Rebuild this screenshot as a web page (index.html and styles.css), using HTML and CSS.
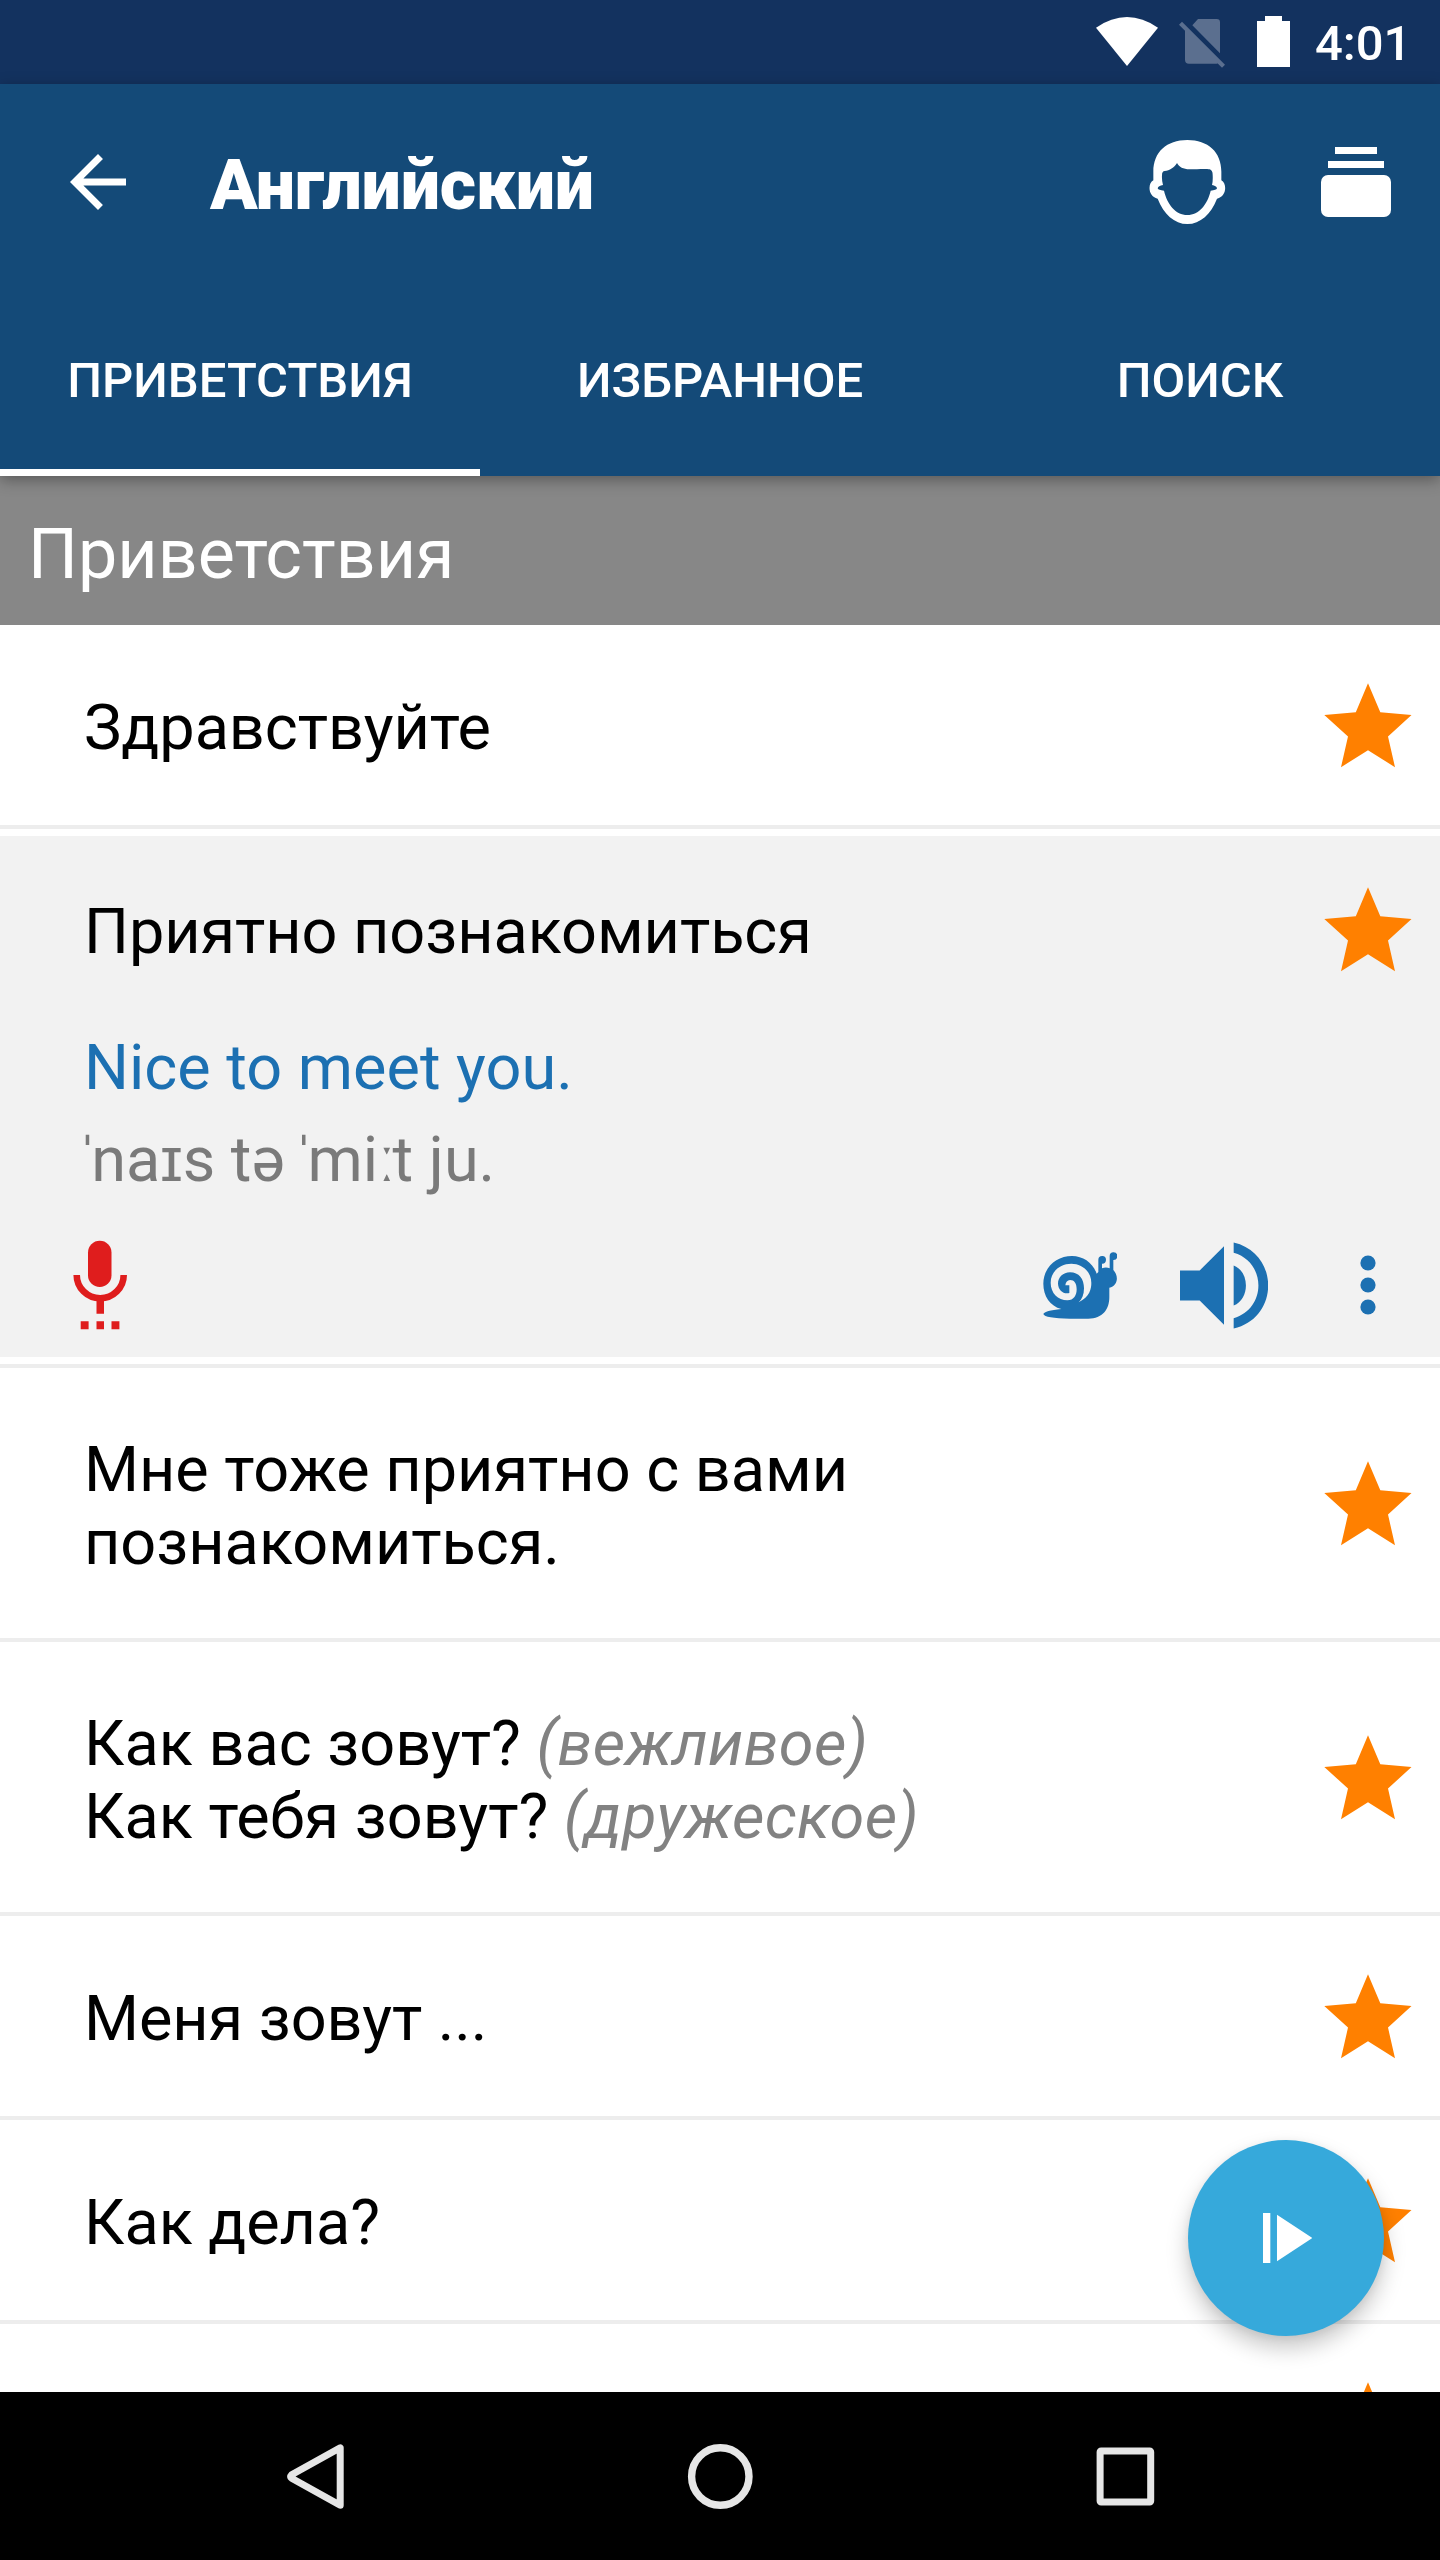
FILE: index.html
```html
<!DOCTYPE html>
<html lang="ru">
<head>
<meta charset="utf-8">
<title>Английский</title>
<link rel="stylesheet" href="styles.css">
</head>
<body>
<svg width="0" height="0" class="defs"><symbol id="star" viewBox="0 0 96 96"><path fill="#ff8000" d="M48 6.2 60.3 35.2 91.5 37.9 68 59.6 75 90.2 48 73.2 21 90.2 28 59.6 4.3 37.9 35.8 35.2Z"/></symbol></svg>
<div class="screen">
  <div class="statusbar">
    <svg class="wifi" viewBox="108 51 186 147"><path fill="#fff" d="M108 83Q201 19 294 83L201 198Z"/></svg>
    <svg class="nosim" viewBox="357 57 138 147"><path fill="#5b6f8f" d="M414 57H470Q480 57 480 67V160L397 76ZM375 91L474 190Q472 191 470 191H387Q375 191 375 179ZM366 65 495 194 486 203 357 74Z"/></svg>
    <svg class="battery" viewBox="0 0 33 51"><path fill="#fff" d="M8 0H25V5H33V51H0V5H8Z"/></svg>
    <span class="clock">4:01</span>
  </div>
  <header class="appbar">
    <div class="toolbar">
      <svg class="back" viewBox="0 0 24 24"><path fill="#fff" d="M20 11H7.83l5.59-5.59L12 4l-8 8 8 8 1.41-1.41L7.83 13H20z"/></svg>
      <h1 class="title">Английский</h1>
      <svg class="face" viewBox="268 420 230 252"><path fill="#fff" fill-rule="evenodd" d="M383 420C445 420 485 456 485 515V541C502 549 502 590 472 596C454 642 422 672 383 672S312 642 294 596C264 590 264 549 281 541V515C281 456 321 420 383 420ZM352 489C343 503 330 512 315 513Q307 514 307 525Q306 543 310 555Q296 557 294 565Q296 571 313 572C322 612 348 645 383 645S444 612 453 572Q470 571 472 565Q470 557 457 555Q460 543 459 525Q459 511 450 508C438 506 410 508 390 508C370 507 359 502 352 489Z"/></svg>
      <svg class="stack" viewBox="0 0 70 70"><path fill="#fff" d="M14 0H56V7H14ZM7 14H63V21H7Z"/><rect y="28" width="70" height="42" rx="7" fill="#fff"/></svg>
    </div>
    <nav class="tabs">
      <div class="tab active">ПРИВЕТСТВИЯ</div>
      <div class="tab">ИЗБРАННОЕ</div>
      <div class="tab">ПОИСК</div>
    </nav>
  </header>
  <main class="list">
    <h2 class="section">Приветствия</h2>
    <div class="row"><p class="phrase">Здравствуйте</p><svg class="star"><use href="#star"/></svg></div>
    <div class="row expanded">
      <div class="card">
        <div class="head"><p class="phrase">Приятно познакомиться</p><svg class="star"><use href="#star"/></svg></div>
        <p class="translation">Nice to meet you.</p>
        <p class="ipa"><span class="stress">ˈ</span>naɪs tə<span class="gap"> </span><span class="stress">ˈ</span>mi<span class="long">ː</span>t ju.</p>
        <div class="actions">
          <svg class="mic" viewBox="73 1240 55 90"><rect x="88" y="1240.7" width="23.5" height="46.3" rx="11.7" fill="#df1d1d"/><path d="M76.7 1275A23.5 23.2 0 0 0 123.7 1275" fill="none" stroke="#df1d1d" stroke-width="6.6"/><path fill="#df1d1d" d="M96.5 1299H104V1313.7H96.5ZM80.7 1321.3H88.6V1329.3H80.7ZM96.5 1321.3H104V1329.3H96.5ZM111.5 1321.3H119.4V1329.3H111.5Z"/></svg>
          <svg class="snail" viewBox="129 154 222 201"><path fill="#1c70b2" d="M130 340Q134 330 184 325C150 316 130 286 130 249C130 200 170 166 216 166C250 166 279 187 290 219L295 214V177A11.5 11.5 0 1 1 306 189V203Q318 198 329 203V166A11.5 11.5 0 1 1 340 178V208C357 225 354 256 328 261V290C328 326 308 354 265 354H210Q134 353 130 340Z"/><path fill="#f2f2f2" d="M236 305C270 288 274 264 274 247C274 212 246 189 214 189C180 189 152 213 152 246C152 277 174 299 202 299C222 299 230 284 230 266C230 248 223 238 210 238Q198 239 196 254H208V277C190 281 175 269 174 249C174 230 189 215 210 215C237 215 252 235 252 263C252 282 246 296 236 305Z"/></svg>
          <svg class="speaker" viewBox="540 125 264 260"><path fill="#1c70b2" d="M540 210H599L672 137V373L599 300H540ZM701 195C750 213 750 297 701 315ZM701 126C839 158 839 352 701 384V353C800 325 800 185 701 157Z"/></svg>
          <svg class="more" viewBox="0 0 16 60"><g fill="#1c70b2"><circle cx="8" cy="8" r="7.6"/><circle cx="8" cy="30" r="7.6"/><circle cx="8" cy="52" r="7.6"/></g></svg>
        </div>
      </div>
    </div>
    <div class="row tall"><p class="phrase">Мне тоже приятно с вами<br>познакомиться.</p><svg class="star"><use href="#star"/></svg></div>
    <div class="row tall"><p class="phrase">Как вас зовут? <i class="note">(вежливое)</i><br>Как тебя зовут? <i class="note">(дружеское)</i></p><svg class="star"><use href="#star"/></svg></div>
    <div class="row"><p class="phrase">Меня зовут ...</p><svg class="star"><use href="#star"/></svg></div>
    <div class="row"><p class="phrase">Как дела?</p><svg class="star"><use href="#star"/></svg></div>
    <div class="row"><p class="phrase"></p><svg class="star"><use href="#star"/></svg></div>
    <button class="fab" aria-label="Play"><svg class="play" viewBox="369 339 148 150"><path fill="#fff" d="M369 339H391V489H369ZM411 344 517 414 411 484Z"/></svg></button>
  </main>
  <footer class="navbar">
    <svg class="nav" viewBox="0 0 68 68"><path d="M59.2 5.8V63.2L10.6 36.2Q9 34.5 10.6 32.8Z" fill="none" stroke="#e6e6e6" stroke-width="7" stroke-linejoin="round"/></svg>
    <svg class="nav" viewBox="0 0 68 68"><circle cx="34.3" cy="34.5" r="28.7" fill="none" stroke="#e6e6e6" stroke-width="7.4"/></svg>
    <svg class="nav" viewBox="0 0 68 68"><rect x="9.1" y="8.9" width="50.6" height="51.2" rx="1" fill="none" stroke="#e6e6e6" stroke-width="7"/></svg>
  </footer>
</div>
</body>
</html>
```
FILE: styles.css
```css
* { box-sizing: border-box; margin: 0; padding: 0; }
body { font-family: Roboto, sans-serif; background: #fff; color: #000; }
svg { display: block; flex: none; }
.defs { position: absolute; }
.screen { width: 1440px; height: 2560px; display: flex; flex-direction: column; overflow: hidden; }

.statusbar { height: 84px; background: #13325f; display: flex; align-items: flex-start; padding-left: 1096px; flex: none; }
.wifi { width: 62px; height: 49px; margin-top: 17px; }
.nosim { width: 46px; height: 49px; margin: 19px 0 0 21px; }
.battery { width: 33px; height: 51px; margin: 16px 0 0 32px; }
.clock { font-size: 49px; font-weight: 500; line-height: 58px; color: #fff; margin: 15px 0 0 25px; }

.appbar { height: 392px; background: #144a78; color: #fff; flex: none; display: flex; flex-direction: column; position: relative; z-index: 2; box-shadow: 0 4px 14px rgba(0, 0, 0, .34); }
.toolbar { height: 196px; display: flex; align-items: center; padding: 0 49px 0 56px; }
.back { width: 84px; height: 84px; }
.title { font-size: 70px; font-weight: 900; letter-spacing: -.25px; line-height: 82px; margin-left: 70px; flex: 1; padding-top: 6px; }
.face { width: 76.7px; height: 84px; margin-right: 95px; }
.stack { width: 70px; height: 70px; }
.tabs { flex: 1; display: grid; grid-template-columns: repeat(3, 1fr); }
.tab { font-size: 49px; font-weight: 500; line-height: 58px; text-align: center; padding-top: 72px; border-bottom: 7px solid transparent; }
.tab.active { border-color: #fff; }

.list { flex: 1; position: relative; overflow: hidden; min-height: 0; }
.section { height: 149px; background: #878787; color: #fff; font-size: 70px; font-weight: 400; line-height: 82px; padding: 37px 0 0 28px; }
.row { height: 204px; border-bottom: 4px solid #ededed; display: flex; align-items: center; justify-content: space-between; padding: 0 24px 0 84px; }
.phrase { font-size: 63px; line-height: 73px; letter-spacing: -.05px; padding-top: 4px; }
.tall { height: 274px; }
.tall .phrase { letter-spacing: 0; padding-top: 6px; }
.tall .note { color: #828282; letter-spacing: .25px; }
.star { width: 96px; height: 96px; }
.expanded { height: 539px; padding: 7px 0; display: block; }
.card { height: 521px; background: #f2f2f2; padding: 45px 24px 0 84px; }
.head { display: flex; align-items: center; justify-content: space-between; }
.translation { font-size: 63px; line-height: 74px; color: #1c70b2; margin-top: 54px; }
.ipa { font-size: 63px; line-height: 74px; color: #7a7a7a; margin: 18px 0 0 -7px; }
.stress { letter-spacing: -6.8px; }
.gap { letter-spacing: -7px; }
.long { letter-spacing: -3px; }
.actions { display: flex; align-items: center; margin: 43px 0 0 -11px; height: 90px; }
.mic { width: 55px; height: 90px; }
.snail { width: 74px; height: 67px; margin-left: 915px; }
.speaker { width: 88px; height: 87px; margin-left: 63px; }
.more { width: 16px; height: 60px; margin-left: 92px; }

.fab { position: absolute; left: 1188px; top: 1664px; width: 196px; height: 196px; border: 0; border-radius: 50%; background: #36a9db; box-shadow: 0 12px 22px rgba(0, 0, 0, .22), 0 2px 8px rgba(0, 0, 0, .06); }
.play { width: 49.3px; height: 50px; margin-left: 75px; }

.navbar { height: 168px; background: #000; flex: none; display: flex; justify-content: center; align-items: center; gap: 337px; }
.nav { width: 68px; height: 68px; }
```
